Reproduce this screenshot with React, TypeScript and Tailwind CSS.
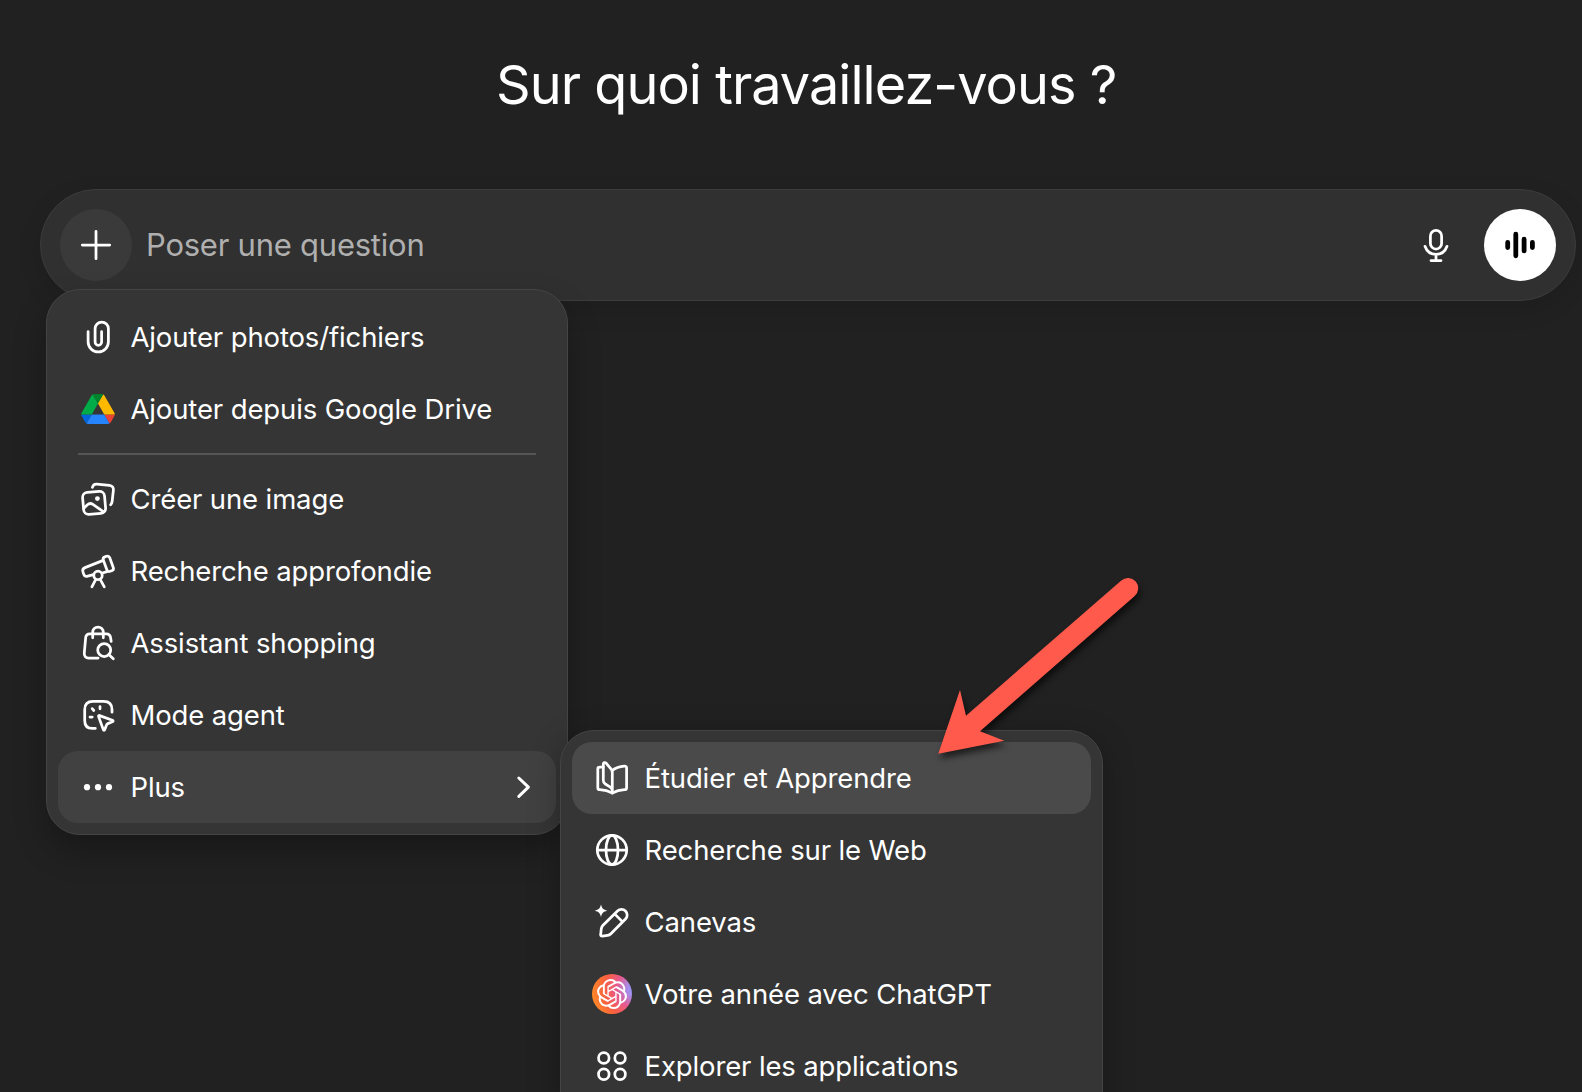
import React from 'react';
import { SiOpenai } from 'react-icons/si';

interface IconProps {
  children: React.ReactNode;
}

// 40px line icon, shared by both menus and the composer
const Icon: React.FC<IconProps> = ({ children }) => (
  <svg
    viewBox="0 0 40 40"
    className="w-10 h-10 shrink-0"
    fill="none"
    stroke="currentColor"
    strokeWidth="2.75"
    strokeLinecap="round"
    strokeLinejoin="round"
  >
    {children}
  </svg>
);

const PaperclipIcon = () => (
  <Icon>
    <path d="M10.1 14.6v10.2a10.15 10.15 0 0 0 20.3 0V11.7a6.65 6.65 0 0 0-13.3 0v13.4a3.25 3.25 0 0 0 6.5 0V14.6" />
  </Icon>
);

const DriveIcon = () => (
  <span className="flex w-10 h-10 shrink-0 items-center justify-center">
    <svg viewBox="0 0 87.3 78" className="w-[34px] h-[30px]">
      <path fill="#0066da" d="m6.6 66.85 3.85 6.65c.8 1.4 1.95 2.5 3.3 3.3l13.75-23.8h-27.5c0 1.55.4 3.1 1.2 4.5z" />
      <path fill="#00ac47" d="m43.65 25-13.75-23.8c-1.35.8-2.5 1.9-3.3 3.3l-25.4 44a9.06 9.06 0 0 0 -1.2 4.5h27.5z" />
      <path fill="#ea4335" d="m73.55 76.8c1.35-.8 2.5-1.9 3.3-3.3l1.6-2.75 7.65-13.25c.8-1.4 1.2-2.95 1.2-4.5h-27.502l5.852 11.5z" />
      <path fill="#00832d" d="m43.65 25 13.75-23.8c-1.35-.8-2.9-1.2-4.5-1.2h-18.5c-1.6 0-3.15.45-4.5 1.2z" />
      <path fill="#2684fc" d="m59.8 53h-32.3l-13.75 23.8c1.35.8 2.9 1.2 4.5 1.2h50.8c1.6 0 3.15-.45 4.5-1.2z" />
      <path fill="#ffba00" d="m73.4 26.5-12.7-22c-.8-1.4-1.95-2.5-3.3-3.3l-13.75 23.8 16.15 28h27.45c0-1.55-.4-3.1-1.2-4.5z" />
    </svg>
  </span>
);

const ImageIcon = () => (
  <Icon>
    <rect x="5.1" y="12.9" width="22" height="22" rx="5" transform="rotate(-5 16.1 23.9)" />
    <path d="M14.4 8.4c.6-2.2 2.1-3.4 4.4-3.2l12.6 1.2c2.8.3 4.3 2.2 4 4.8l-1.3 11.6c-.2 1.3-.7 2.3-1.5 3.1" />
    <path d="M5.8 29.2l3.6-3.4c1.7-1.5 3.7-1.6 5.5-.4l10.7 7.4" />
    <circle cx="19.4" cy="19.6" r="2.4" fill="currentColor" stroke="none" />
  </Icon>
);

const TelescopeIcon = () => (
  <Icon>
    <rect x="26.9" y="5.1" width="6.8" height="15.4" rx="2.6" transform="rotate(-20 30.3 12.8)" />
    <path d="M24.6 9.6L7 16.6c-2 .8-2.7 2.2-2.1 4.1l.8 2.4c.7 2 2 2.7 4 2.1l5.8-1.6M24.4 22l4.6-1.4" />
    <circle cx="20" cy="24.4" r="4.2" />
    <path d="M17.8 28.4L13.9 35.8M22.2 28.4l4.1 7.4" />
  </Icon>
);

const ShoppingIcon = () => (
  <Icon>
    <path d="M33.2 18.4l-.7-4.1c-.4-2.2-1.8-3.5-4.1-3.5H11.8c-2.4 0-3.8 1.3-4.1 3.5L6.3 29.8c-.3 3.2 1.3 5.2 4.4 5.2h9.4" />
    <path d="M14.7 14.8V9.3a5.3 5.3 0 0 1 10.6 0v5.5" />
    <circle cx="26.2" cy="27" r="6.5" />
    <path d="M31 31.8l4.3 4" />
  </Icon>
);

const AgentIcon = () => (
  <Icon>
    <path d="M34 17.2v-2.6c0-5.4-2.8-8.2-8.2-8.2H14.9c-5.4 0-8.2 2.8-8.2 8.2v10.8c0 5.4 2.6 8 7.6 8h3" />
    <path d="M21.6 20.6l12.8 4.6c1 .4 1 1.2 0 1.6l-4.6 1.8c-.6.2-.9.5-1.2 1.2l-1.8 4.8c-.4 1-1.2 1-1.5 0l-4.7-13c-.3-.8.2-1.3 1-1z" />
    <path d="M14.2 13.6l1.6 1.9M22 11.6v2.2M12 22h2.2" />
  </Icon>
);

const DotsIcon = () => (
  <Icon>
    <g fill="currentColor" stroke="none">
      <circle cx="9" cy="20.2" r="3.1" />
      <circle cx="20" cy="20.2" r="3.1" />
      <circle cx="31" cy="20.2" r="3.1" />
    </g>
  </Icon>
);

const BookIcon = () => (
  <Icon>
    <path d="M20.3 12.4c3.2-2.6 7.4-4 12-4.3 1.5-.1 2.3.6 2.3 2v19.6c0 1.3-.7 2-2 2-4.6.2-8.5 1.2-12.3 3.3-3.9-2.1-7.9-3.1-12.5-3.3-1.3 0-2-.8-2-2V11c0-1.3.7-1.9 2-1.9h3.5" />
    <path d="M20.3 35V14.6c0-1.9-.5-3.1-1.8-4.3l-4.2-5c-1.4-1.4-3-.8-3 1.1v15.8c0 1.9.5 2.9 2 3.8l4.6 2.8c1.7 1.1 2.4 2.2 2.4 4" />
  </Icon>
);

const GlobeIcon = () => (
  <Icon>
    <circle cx="20" cy="20" r="14.7" />
    <ellipse cx="20" cy="20" rx="6" ry="14.7" />
    <path d="M5.3 20h29.4" />
  </Icon>
);

const CanvasIcon = () => (
  <Icon>
    <path d="M8.7 32.3l.6-5.6c.2-1.5.7-2.5 1.7-3.5L25.5 9a5.65 5.65 0 0 1 8 8L18.9 31.7c-1 1-2 1.5-3.4 1.7l-5.2.7c-1.2.1-1.8-.5-1.6-1.8zM22.6 11.9l8 8" />
    <path
      d="M9 2.5c1 3.9 2.3 5.2 6.2 6.2-3.9 1-5.2 2.3-6.2 6.2-1-3.9-2.3-5.200-6.2-6.200 3.900-1 5.200-2.300 6.200-6.200z"
      fill="currentColor"
      stroke="none"
    />
  </Icon>
);

const YearIcon = () => (
  <span className="flex w-10 h-10 shrink-0 items-center justify-center rounded-full bg-[radial-gradient(circle_at_108%_38%,#8c9dff_0%,#a98be8_16%,#e8588c_38%,#f9603f_62%,#ff8a26_88%)]">
    <SiOpenai className="w-[30px] h-[30px] text-white" />
  </span>
);

const AppsIcon = () => (
  <Icon>
    <circle cx="11.8" cy="12" r="5.3" />
    <circle cx="28.1" cy="12" r="5.3" />
    <circle cx="11.8" cy="28.2" r="5.3" />
    <circle cx="28.1" cy="28.2" r="5.3" />
  </Icon>
);

interface MenuItemProps {
  icon: React.ReactNode;
  label: string;
  className?: string;
  trailing?: React.ReactNode;
}

const MenuItem: React.FC<MenuItemProps> = ({ icon, label, className = '', trailing }) => (
  <div className={`flex h-[72px] shrink-0 items-center gap-3 rounded-[20px] pl-5 pr-3 ${className}`}>
    {icon}
    <span className="flex-1 whitespace-nowrap pl-[0.5px] text-[27.5px] leading-10 tracking-[-0.13px]">{label}</span>
    {trailing}
  </div>
);

const Composer = () => (
  <div className="ml-10 flex h-28 w-[1536px] items-center rounded-full border border-[#3c3c3c] bg-[#303030] px-[19px] shadow-[0_8px_24px_rgba(0,0,0,0.12)]">
    <button className="flex h-[72px] w-[72px] items-center justify-center rounded-full bg-[#3a3a3a]" aria-label="Ajouter">
      <Icon>
        <path d="M6.3 20h27.4M20 6.3v27.4" />
      </Icon>
    </button>
    <span className="ml-3.5 flex-1 text-[31px] tracking-[-0.24px] text-[#afafaf]">Poser une question</span>
    <Icon>
      <rect x="14.4" y="5.4" width="11.2" height="18.6" rx="5.6" />
      <path d="M9 21.3c1.7 4.9 6 8.1 11 8.1s9.3-3.2 11-8.1M20 29.6v5.9M15 35.6h10" />
    </Icon>
    <button className="ml-7 flex h-[72px] w-[72px] items-center justify-center rounded-full bg-white text-black" aria-label="Mode vocal">
      <svg viewBox="0 0 40 40" className="w-10 h-10" fill="none" stroke="currentColor" strokeWidth="4.8" strokeLinecap="round">
        <path d="M7.7 17.5v5M15.8 9.2v21.6M24.1 14.2v11.7M32.4 17.5v5" />
      </svg>
    </button>
  </div>
);

const MainMenu = () => (
  <div className="absolute left-[46px] top-[289px] flex h-[546px] w-[522px] flex-col rounded-[34px] border border-[#444444] bg-[#353535] p-[11px] shadow-[0_16px_32px_rgba(0,0,0,0.28)]">
    <MenuItem icon={<PaperclipIcon />} label="Ajouter photos/fichiers" />
    <MenuItem icon={<DriveIcon />} label="Ajouter depuis Google Drive" />
    <div className="mx-5 my-2 h-0.5 shrink-0 bg-[#555555]" />
    <MenuItem icon={<ImageIcon />} label="Créer une image" />
    <MenuItem icon={<TelescopeIcon />} label="Recherche approfondie" />
    <MenuItem icon={<ShoppingIcon />} label="Assistant shopping" />
    <MenuItem icon={<AgentIcon />} label="Mode agent" />
    <MenuItem
      icon={<DotsIcon />}
      label="Plus"
      className="bg-[#414141]"
      trailing={
        <Icon>
          <path d="M14.8 11l9.6 9.200-9.600 9.200" strokeWidth="3" />
        </Icon>
      }
    />
  </div>
);

const SubMenu = () => (
  <div className="absolute left-[560px] top-[730px] flex h-[400px] w-[543px] flex-col rounded-[34px] border border-[#444444] bg-[#353535] p-[11px] shadow-[0_8px_32px_rgba(0,0,0,0.28)]">
    <MenuItem icon={<BookIcon />} label="Étudier et Apprendre" className="bg-[#4a4a4a]" />
    <MenuItem icon={<GlobeIcon />} label="Recherche sur le Web" />
    <MenuItem icon={<CanvasIcon />} label="Canevas" />
    <MenuItem icon={<YearIcon />} label="Votre année avec ChatGPT" />
    <MenuItem icon={<AppsIcon />} label="Explorer les applications" />
  </div>
);

// Annotation arrow pointing at the study mode entry
const Arrow = () => (
  <svg
    viewBox="0 0 240 200"
    className="absolute left-[920px] top-[570px] w-[240px] h-[200px] drop-shadow-[2px_5px_3px_rgba(0,0,0,0.6)]"
  >
    <path fill="#ff5a4c" d="M18.3 183.8L40 120l6 25.7L201.300 10.500a10.200 10.200 0 0 1 13.400 15.400L60 161.200l24.300 9.500z" />
  </svg>
);

export default function App() {
  return (
    <div className="relative flex h-[1092px] w-[1582px] flex-col overflow-hidden bg-[#212121] font-['Inter','Liberation_Sans',sans-serif] text-white">
      <h1 className="mt-[50px] mb-[69px] ml-[496px] whitespace-nowrap text-[54px] leading-[70px] tracking-[-0.95px]">
        Sur quoi travaillez-vous ?
      </h1>
      <Composer />
      <MainMenu />
      <SubMenu />
      <Arrow />
    </div>
  );
}
